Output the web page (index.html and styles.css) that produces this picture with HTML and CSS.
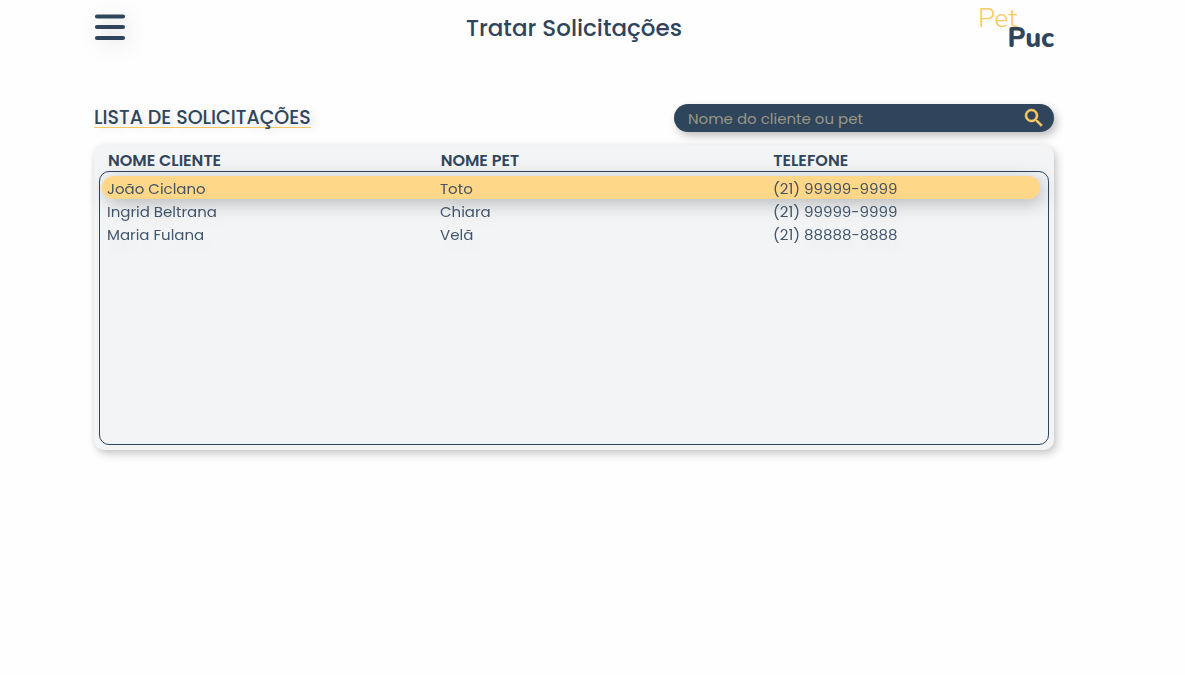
FILE: index.html
```html
<!DOCTYPE html>
<html lang="pt-BR">
<head>
<meta charset="utf-8">
<meta name="viewport" content="width=device-width, initial-scale=1">
<title>Tratar Solicitações</title>
<link rel="stylesheet" href="styles.css">
</head>
<body>
<div class="page">
  <header class="topbar">
    <button class="menu" type="button" aria-label="Menu">
      <svg width="32" height="30" viewBox="0 0 32 30" aria-hidden="true"><path d="M3 3.500H29M3 14H29M3 25H29" fill="none" stroke="currentColor" stroke-width="4.200" stroke-linecap="round"/></svg>
    </button>
    <h1 class="title">Tratar Solicitações</h1>
    <a class="logo" href="#"><span class="logo-pet">Pet</span><span class="logo-puc">Puc</span></a>
  </header>
  <main>
    <div class="toolbar">
      <h2 class="subtitle">LISTA DE SOLICITAÇÕES</h2>
      <form class="search">
        <input class="search-input" type="text" aria-label="Nome do cliente ou pet" placeholder="Nome do cliente ou pet">
        <button class="search-button" type="button" aria-label="Buscar">
          <svg width="24" height="24" viewBox="0 0 24 24" aria-hidden="true"><path fill="currentColor" stroke="currentColor" stroke-width=".5" d="M15.500 14h-.79l-.28-.27A6.470 6.470 0 0 0 16 9.500 6.500 6.500 0 1 0 9.500 16c1.610 0 3.090-.59 4.230-1.570l.27.28v.79l5 4.990L20.490 19l-4.990-5zm-6 0C7.010 14 5 11.990 5 9.500S7.010 5 9.500 5 14 7.010 14 9.500 11.990 14 9.500 14z"/></svg>
        </button>
      </form>
    </div>
    <table class="panel">
      <thead class="panel-head">
        <tr class="row"><th>NOME CLIENTE</th><th>NOME PET</th><th>TELEFONE</th></tr>
      </thead>
      <tbody class="panel-body">
        <tr class="row row-active"><td>João Ciclano</td><td>Toto</td><td>(21) 99999-9999</td></tr>
        <tr class="row"><td>Ingrid Beltrana</td><td>Chiara</td><td>(21) 99999-9999</td></tr>
        <tr class="row"><td>Maria Fulana</td><td>Velã</td><td>(21) 88888-8888</td></tr>
      </tbody>
    </table>
  </main>
</div>
</body>
</html>
```

FILE: styles.css
```css
* {
  box-sizing: border-box;
}

body {
  margin: 0;
  background: #fefefe;
  color: #2f455c;
  font-family: Poppins, Inter, "Open Sans", sans-serif;
}

button {
  padding: 0;
  border: 0;
  background: none;
}

.page {
  min-height: 100vh;
  padding: 0 131px 0 94px;
}

.topbar {
  display: grid;
  grid-template-columns: 1fr auto 1fr;
  align-items: center;
  height: 56px;
}

.menu {
  justify-self: start;
  height: 30px;
  color: #2f455c;
  filter: drop-shadow(4px 4px 10px rgba(0, 0, 0, 0.15));
}

.menu svg {
  display: block;
}

.title {
  margin: 0;
  font-size: 23px;
  font-weight: 500;
  line-height: 32px;
}

.logo {
  justify-self: end;
  display: flex;
  flex-direction: column;
  width: 76px;
  padding-top: 2px;
  font-family: Nunito, Lato, sans-serif;
  font-size: 27px;
  line-height: 20px;
  text-decoration: none;
}

.logo-pet {
  color: #fcca5f;
  font-weight: 300;
}

.logo-puc {
  align-self: flex-end;
  color: #2f455c;
  font-weight: 800;
}

.toolbar {
  display: flex;
  align-items: center;
  justify-content: space-between;
  margin: 48px 0 13px;
}

.subtitle {
  margin: 0;
  border-bottom: 1px solid #fcca5f;
  font-size: 19px;
  font-weight: 500;
  line-height: 19px;
  text-shadow: 4px 4px 10px rgba(0, 0, 0, 0.15);
}

.search {
  display: flex;
  align-items: center;
  width: 380px;
  height: 28px;
  padding: 0 8px 0 14px;
  border-radius: 14px;
  background: #2f455c;
  box-shadow: 3px 4px 8px rgba(0, 0, 0, 0.25);
}

.search-input {
  flex: 1;
  min-width: 0;
  padding: 2px 0 0;
  border: 0;
  outline: 0;
  background: none;
  color: #ffd788;
  font: 400 15px/24px Poppins, Inter, sans-serif;
}

.search-input::placeholder {
  color: #9b9685;
  opacity: 1;
}

.search-button {
  height: 24px;
  color: #fcca5f;
}

.panel {
  display: block;
  padding: 4px 5px 5px;
  border-radius: 10px;
  background: #f2f4f6;
  box-shadow: 3px 4px 8px rgba(0, 0, 0, 0.2), -1px 0 6px rgba(0, 0, 0, 0.05);
}

.panel-head {
  display: block;
  padding: 0 9px 0 4px;
}

.panel-body {
  display: block;
  height: 274px;
  padding: 4px 8px 0 2px;
  border: 1px solid #2f455c;
  border-radius: 10px;
}

.row {
  display: grid;
  grid-template-columns: 333fr 333fr 272fr;
}

.row th,
.row td {
  padding: 2px 0 0 5px;
  text-align: left;
}

.row th {
  font-size: 16px;
  font-weight: 600;
  line-height: 20px;
}

.row td {
  font-size: 15px;
  line-height: 21px;
  opacity: 0.9;
  text-shadow: 4px 10px 16px rgba(0, 0, 0, 0.15);
}

.row-active {
  border-radius: 12px;
  background: #ffd788;
  box-shadow: 3px 4px 18px rgba(0, 0, 0, 0.25);
}
```
